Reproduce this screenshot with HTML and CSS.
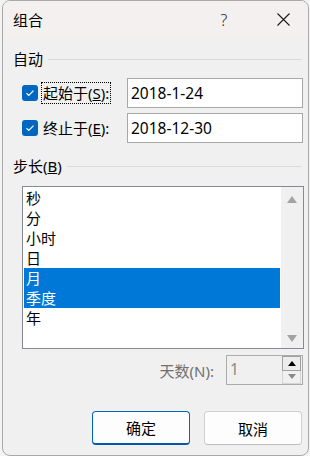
FILE: index.html
```html
<!DOCTYPE html>
<html lang="zh-CN">
<head>
    <meta charset="UTF-8">
    <title>组合</title>
    <link rel="stylesheet" href="styles.css">
</head>
<body>
    <div class="win">
        <div class="titlebar">
            <span class="title">组合</span>
            <span class="tb-btn help">?</span>
            <span class="tb-btn close">
                <svg width="13" height="13" viewBox="0 0 13 13"><path d="M0.5 0.5L12.5 12.5M12.5 0.5L0.5 12.5" stroke="#1a1a1a" stroke-width="1.1" fill="none"/></svg>
            </span>
        </div>

        <div class="content">
            <div class="group-head">
                <span>自动</span>
                <i class="rule"></i>
            </div>

            <div class="row first">
                <span class="check"><svg width="16" height="16" viewBox="0 0 16 16"><path d="M4.5 8.3L6.8 10.5L11.5 5.6" stroke="#fff" stroke-width="1.2" fill="none"/></svg></span>
                <span class="lbl"><span class="focus">起始于(<u>S</u>):</span></span>
                <span class="field">2018-1-24</span>
            </div>

            <div class="row">
                <span class="check"><svg width="16" height="16" viewBox="0 0 16 16"><path d="M4.5 8.3L6.8 10.5L11.5 5.6" stroke="#fff" stroke-width="1.2" fill="none"/></svg></span>
                <span class="lbl"><span class="nofocus">终止于(<u>E</u>):</span></span>
                <span class="field">2018-12-30</span>
            </div>

            <div class="group-head second">
                <span>步长(<u>B</u>)</span>
                <i class="rule"></i>
            </div>

            <div class="listbox">
                <ul class="items">
                    <li>秒</li>
                    <li>分</li>
                    <li>小时</li>
                    <li>日</li>
                    <li class="sel">月</li>
                    <li class="sel">季度</li>
                    <li>年</li>
                </ul>
                <div class="vscroll">
                    <span class="arr up"></span>
                    <span class="arr down"></span>
                </div>
            </div>

            <div class="spin-row">
                <span class="spin-lbl">天数(N):</span>
                <div class="spin">
                    <span class="spin-val">1</span>
                    <div class="spin-btns">
                        <span class="sb sb-up"><i></i></span>
                        <span class="sb sb-down"><i></i></span>
                    </div>
                </div>
            </div>

            <div class="actions">
                <button class="btn default">确定</button>
                <button class="btn">取消</button>
            </div>
        </div>
    </div>
</body>
</html>
```

FILE: styles.css
```css
body {
    margin: 0;
    background: #f3f3f3;
    font-family: "Noto Sans", "Noto Sans CJK SC", sans-serif;
    font-size: 15px;
    color: #000;
}

.win {
    margin-left: 2px;
    width: 307px;
    height: 456px;
    box-sizing: border-box;
    border: 1px solid #a9a9a9;
    border-radius: 8px;
    background: #f0f0f0;
    overflow: hidden;
}

.titlebar {
    height: 37px;
    display: flex;
    align-items: center;
    background: #f3f0ef;
    padding: 0 2px 0 10px;
}

.title {
    flex: 1;
    font-size: 15px;
    line-height: 20px;
}

.tb-btn {
    width: 46px;
    height: 37px;
    display: flex;
    align-items: center;
    justify-content: center;
    color: #1a1a1a;
}

.help {
    font-family: "Noto Sans", sans-serif;
    font-weight: 300;
    font-size: 16px;
    margin-right: 13px;
}

.content {
    padding: 0 4px 0 10px;
}

.group-head {
    display: flex;
    align-items: center;
    height: 18px;
    line-height: 18px;
    margin-top: 12px;
}

.group-head.second {
    margin-top: 14px;
}

.rule {
    flex: 1;
    height: 1px;
    background: #d9d9d9;
    margin: 0 2px 0 5px;
}

.row {
    display: flex;
    align-items: center;
    height: 30px;
    margin-top: 5px;
    padding-left: 9px;
}

.row.first {
    margin-top: 10px;
}

.check {
    width: 16px;
    height: 16px;
    border-radius: 3px;
    background: #0067c0;
    flex: none;
    display: flex;
}

.lbl {
    flex: 1;
    padding-left: 3px;
}

.focus,
.nofocus {
    display: inline-block;
    height: 20px;
    line-height: 20px;
    padding: 0 1px;
    border: 1px dotted transparent;
}

.focus {
    border-color: #000;
}

.field {
    width: 176px;
    height: 30px;
    box-sizing: border-box;
    border: 1px solid #a8a8a8;
    background: #fff;
    margin-right: 1px;
    padding-left: 3px;
    line-height: 28px;
    font-size: 15.5px;
}

.listbox {
    display: flex;
    margin: 11px 0 0 9px;
    height: 163px;
    box-sizing: border-box;
    border: 1px solid #868a93;
    background: #fff;
}

.items {
    list-style: none;
    margin: 0;
    padding: 1px;
    flex: 1;
}

.items li {
    height: 20px;
    line-height: 20px;
    padding-left: 2px;
}

.items li.sel {
    background: #0078d7;
    color: #fff;
}

.vscroll {
    width: 22px;
    background: #f0f0f0;
    display: flex;
    flex-direction: column;
    justify-content: space-between;
    align-items: center;
    padding: 9px 0 6px;
}

.arr {
    width: 0;
    height: 0;
    border-left: 5px solid transparent;
    border-right: 5px solid transparent;
}

.arr.up {
    border-bottom: 7px solid #a3a3a3;
}

.arr.down {
    border-top: 7px solid #a3a3a3;
}

.spin-row {
    display: flex;
    justify-content: flex-end;
    align-items: center;
    margin-top: 6px;
}

.spin-lbl {
    color: #6f6f6f;
    margin-right: 12px;
}

.spin {
    width: 77px;
    height: 30px;
    box-sizing: border-box;
    border: 1px solid #ababab;
    display: flex;
    margin-right: 1px;
    background: #f0f0f0;
}

.spin-val {
    flex: 1;
    color: #8a8a8a;
    padding-left: 3px;
    line-height: 27px;
    font-size: 15.5px;
}

.spin-btns {
    width: 19px;
    display: flex;
    flex-direction: column;
    padding: 0 1px 0 0;
}

.sb {
    flex: 1;
    display: flex;
    align-items: center;
    justify-content: center;
    box-sizing: border-box;
}

.sb-up {
    border: 1px solid #a0a0a0;
    background: #ececec;
}

.sb-down {
    border: 1px solid #d6d6d6;
    border-top: none;
    background: #f0f0f0;
}

.sb i {
    width: 0;
    height: 0;
    border-left: 4px solid transparent;
    border-right: 4px solid transparent;
}

.sb-up i {
    border-bottom: 5px solid #000;
}

.sb-down i {
    border-top: 5px solid #8a8a8a;
}

.actions {
    display: flex;
    justify-content: flex-end;
    gap: 14px;
    margin: 26px 2px 0 0;
}

.btn {
    width: 98px;
    height: 34px;
    box-sizing: border-box;
    border: 1px solid #d0d0d0;
    border-bottom-color: #bcbcbc;
    border-radius: 4px;
    background: #fdfdfd;
    font-family: "Noto Sans", "Noto Sans CJK SC", sans-serif;
    font-size: 15px;
    color: #000;
    padding: 0;
}

.btn.default {
    border-color: #0067c0;
    border-bottom: 2px solid #0058a8;
}
```
